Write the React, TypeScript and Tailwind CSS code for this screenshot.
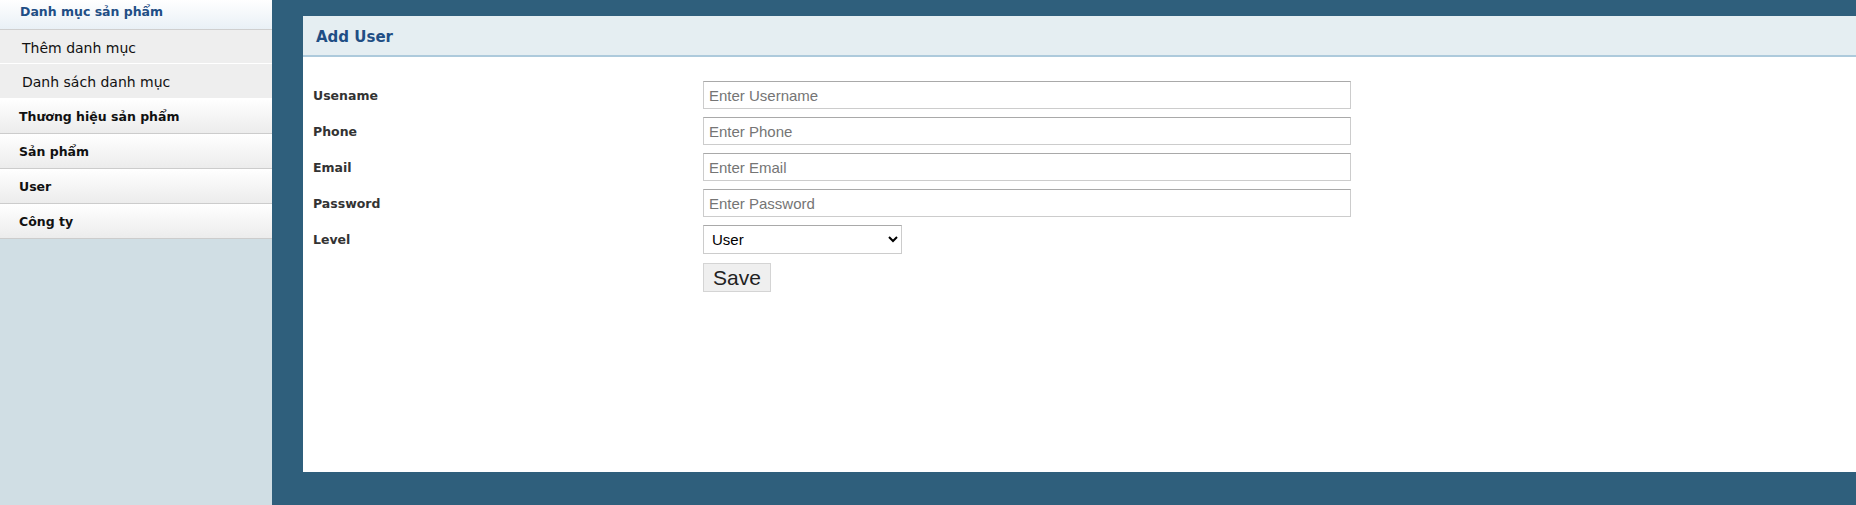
import React from "react";

const tahoma = { fontFamily: '"DejaVu Sans", Verdana, sans-serif' };
const arial = { fontFamily: '"Liberation Sans", Arial, sans-serif' };

function NavHeader({ label }: { label: string }) {
  return (
    <div className="h-[30px] flex items-center pl-[20px] pb-[4px] border-b border-[#cfcfcf] bg-gradient-to-b from-[#ffffff] to-[#e9f0f6] text-[12.5px] font-bold text-[#1f4e85]">
      {label}
    </div>
  );
}

function NavSub({ label, h }: { label: string; h: string }) {
  return (
    <div className={`${h} flex items-center pl-[22px] pt-[3px] border-b border-white bg-[#eeeeee] text-[14px] text-[#111]`}>
      {label}
    </div>
  );
}

function NavItem({ label }: { label: string }) {
  return (
    <div className="h-[35px] flex items-center pl-[19px] pt-[3px] border-b border-[#cccccc] bg-gradient-to-b from-[#ffffff] to-[#ececec] text-[12.5px] font-bold text-[#111]">
      {label}
    </div>
  );
}

function Row({ label, children }: { label: string; children: React.ReactNode }) {
  return (
    <div className="flex items-center h-[36px]">
      <div className="w-[400px] shrink-0 pl-[10px] pt-[2px] text-[12.5px] font-bold text-[#333]" style={tahoma}>
        {label}
      </div>
      {children}
    </div>
  );
}

function Field({ placeholder, type = "text" }: { placeholder: string; type?: string }) {
  return (
    <input
      type={type}
      placeholder={placeholder}
      className="w-[648px] h-[28px] border border-[#cccccc] border-t-[#a9a9a9] px-[5px] text-[15px] text-[#333] placeholder:text-[#757575] bg-white outline-none"
      style={arial}
    />
  );
}

export default function App() {
  return (
    <div className="w-[1856px] h-[505px] flex bg-[#2f5f7c] overflow-hidden" style={tahoma}>
      <aside className="w-[272px] h-full bg-[#d0dee4] flex flex-col shrink-0">
        <NavHeader label="Danh mục sản phẩm" />
        <NavSub label="Thêm danh mục" h="h-[34px]" />
        <NavSub label="Danh sách danh mục" h="h-[35px]" />
        <NavItem label="Thương hiệu sản phẩm" />
        <NavItem label="Sản phẩm" />
        <NavItem label="User" />
        <NavItem label="Công ty" />
      </aside>
      <main className="flex-1 pl-[31px] pt-[16px] pb-[33px]">
        <div className="h-full bg-white flex flex-col">
          <div className="h-[41px] shrink-0 bg-[#e5eef2] border-b-2 border-[#adcadc] flex items-center pl-[13px] pt-[3px] text-[15px] font-bold text-[#1f4e85]">
            Add User
          </div>
          <div className="pt-[20px]">
            <Row label="Usename">
              <Field placeholder="Enter Username" />
            </Row>
            <Row label="Phone">
              <Field placeholder="Enter Phone" />
            </Row>
            <Row label="Email">
              <Field placeholder="Enter Email" />
            </Row>
            <Row label="Password">
              <Field placeholder="Enter Password" type="password" />
            </Row>
            <Row label="Level">
              <select
                defaultValue="User"
                className="w-[199px] h-[29px] border border-[#cccccc] border-t-[#a9a9a9] bg-white pl-[4px] pr-[6px] text-[15px] text-black"
                style={arial}
              >
                <option>User</option>
                <option>Admin</option>
              </select>
            </Row>
            <div className="flex pl-[400px] pt-[6px]">
              <button
                className="w-[68px] h-[29px] bg-[#efefef] border border-[#d4d4d4] text-[21px] leading-none text-[#222]"
                style={arial}
              >
                Save
              </button>
            </div>
          </div>
        </div>
      </main>
    </div>
  );
}
